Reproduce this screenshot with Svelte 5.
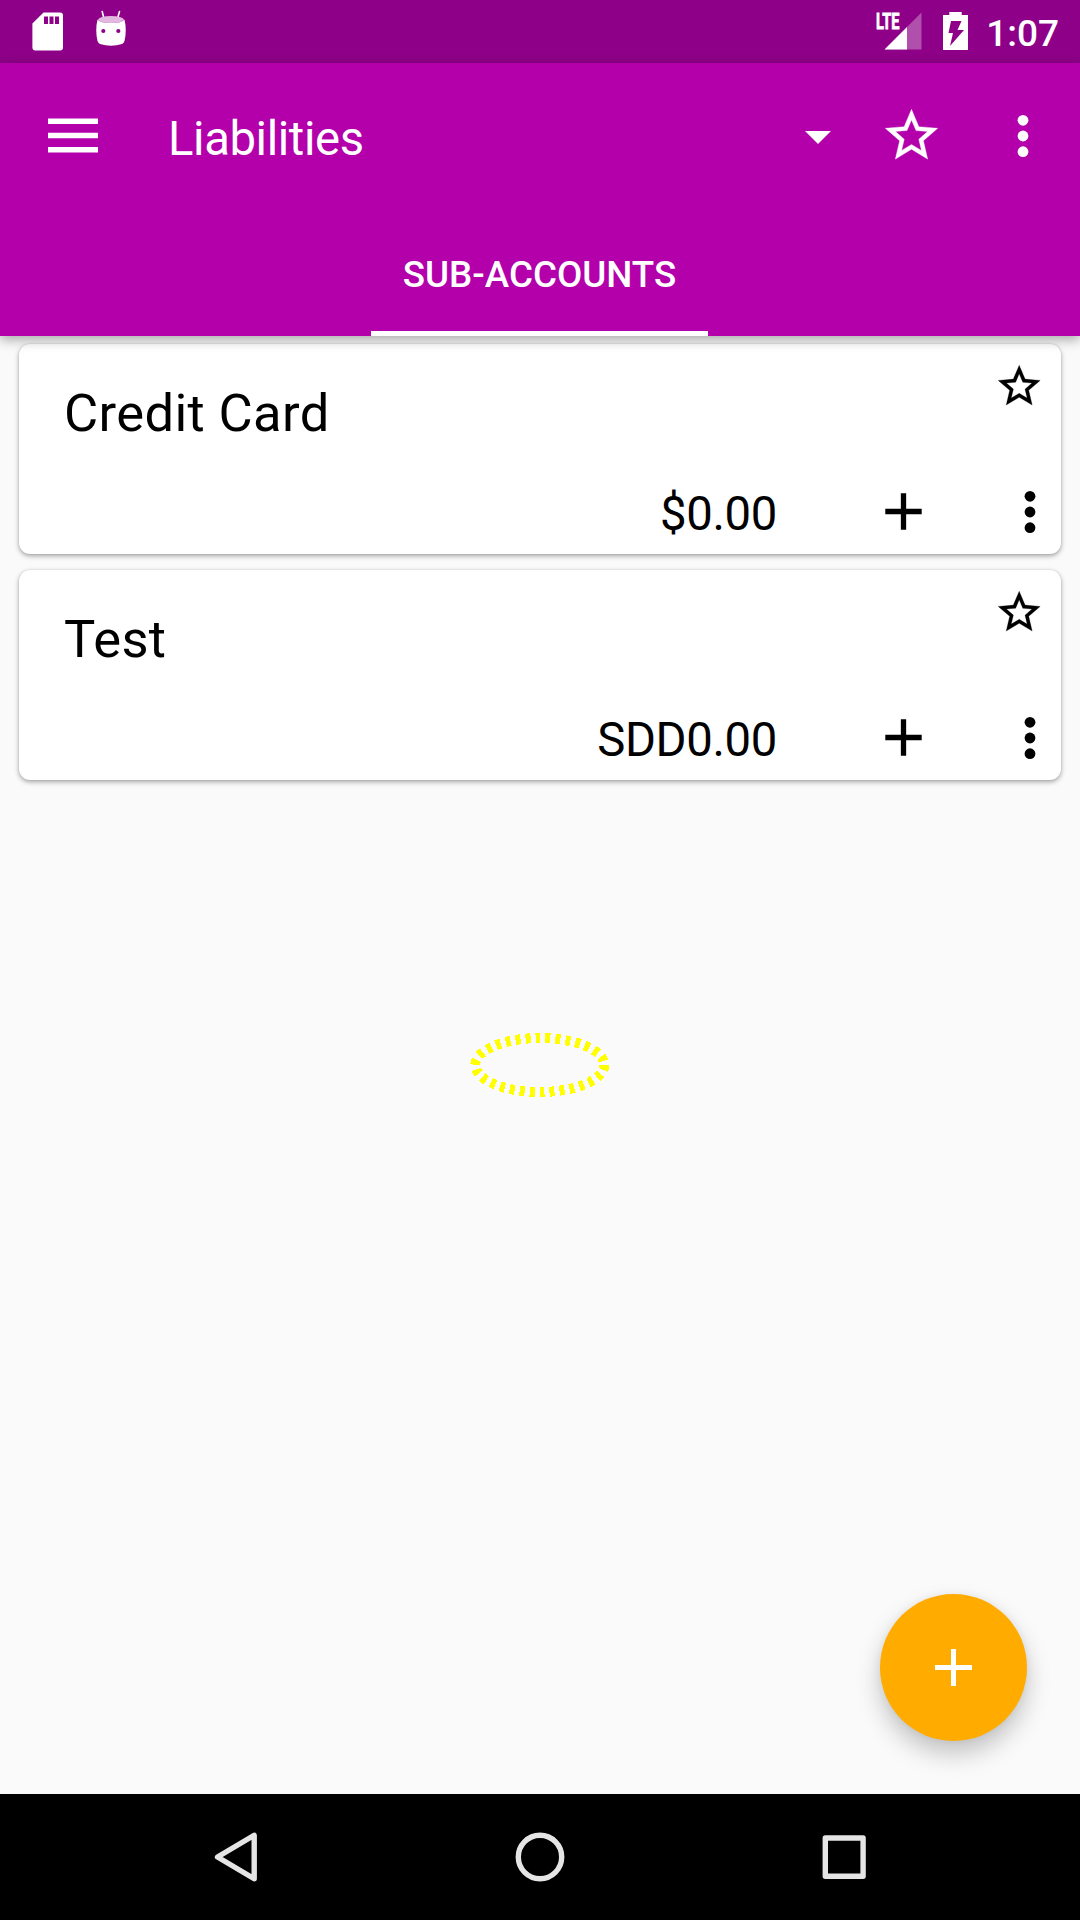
<script>
  const accounts = [
    { name: 'Credit Card', balance: '$0.00' },
    { name: 'Test', balance: 'SDD0.00' }
  ];
</script>

{#snippet star(size)}
  <svg width={size} height={size} viewBox="0 0 24 24" fill="currentColor" stroke="currentColor" stroke-width=".12">
    <path d="M22 9.24l-7.19-.62L12 2 9.19 8.63 2 9.24l5.46 4.73L5.82 21 12 17.27 18.18 21l-1.63-7.03L22 9.24zM12 15.4l-3.76 2.27 1-4.28-3.32-2.88 4.38-.38L12 6.1l1.71 4.04 4.38.38-3.32 2.88 1 4.28L12 15.4z" />
  </svg>
{/snippet}

{#snippet dots()}
  <svg width="12" height="44" viewBox="0 0 12 44" fill="currentColor">
    <circle cx="6" cy="6.300" r="5.400" />
    <circle cx="6" cy="22" r="5.400" />
    <circle cx="6" cy="37.700" r="5.400" />
  </svg>
{/snippet}

<div class="screen">
  <div class="status">
    <svg class="sd" width="31" height="39" viewBox="0 0 31 39">
      <path d="M11.500.500H28a3 3 0 0 1 3 3V35.500a3 3 0 0 1-3 3H3.400a3 3 0 0 1-3-3V11.500z" fill="#fff" />
      <path d="M12 4.500h4v7.500h-4zM17.500 4.500h4v7.500h-4zM23 4.500h4v7.500h-4z" fill="#8d0087" />
    </svg>
    <svg class="droid" width="32" height="37" viewBox="0 0 32 37">
      <path d="M7.200 1.500l1.500 6M24.500 1.500l-1.700 6" stroke="#fff" stroke-width="1.600" stroke-linecap="round" />
      <path d="M3 9.500Q5 6 16 6T29 9.500Q27 13 16 13T3 9.500z" fill="#e2b8e0" />
      <path d="M2.500 9.500Q5 13 16 13T29.500 9.500Q32 20 29.500 31Q29 33 27 33.900Q16 37.500 5 33.900Q3 33 2.500 31Q0 20 2.500 9.500z" fill="#fff" />
      <circle cx="8.300" cy="21" r="2.100" fill="#8d0087" />
      <circle cx="23.300" cy="21" r="2.100" fill="#8d0087" />
    </svg>
    <div class="grow"></div>
    <svg class="signal" width="48" height="40" viewBox="0 0 48 40">
      <path d="M46.500.500V37.500H9.500z" fill="#fff" opacity=".31" />
      <path d="M32 15V37.500H9.500z" fill="#fff" />
      <text x="1" y="17.300" textLength="23.500" lengthAdjust="spacingAndGlyphs">LTE</text>
    </svg>
    <svg class="battery" width="25" height="38" viewBox="0 0 25 38">
      <path d="M6.300 0H18.700V3H25V38H0V3H6.300z" fill="#fff" />
      <path d="M8 9H18.500L14.500 18H21L7 34L10 21H5.500z" fill="#8d0087" />
    </svg>
    <span class="clock">1:07</span>
  </div>

  <header>
    <div class="toolbar">
      <svg class="menu" width="50" height="35" viewBox="0 0 50 35" fill="#fff">
        <path d="M0 .500H50V6H0zM0 14.700H50V20.200H0zM0 28.900H50V34.400H0z" />
      </svg>
      <h1>Liabilities</h1>
      <svg class="caret" width="26" height="13" viewBox="0 0 26 13"><path d="M0 0H26L13 13z" fill="#fff" /></svg>
      <span class="fav">{@render star(63)}</span>
      <span class="more">{@render dots()}</span>
    </div>
    <div class="tabs"><div class="tab">SUB-ACCOUNTS</div></div>
  </header>

  <main>
    {#each accounts as account}
      <section class="card">
        <div class="top">
          <h2>{account.name}</h2>
          <span class="star">{@render star(50.4)}</span>
        </div>
        <div class="bottom">
          <span class="balance">{account.balance}</span>
          <svg class="add" width="37" height="37" viewBox="0 0 37 37">
            <path d="M.300 18.500H36.700M18.500.300V36.700" stroke="#000" stroke-width="5.300" />
          </svg>
          {@render dots()}
        </div>
      </section>
    {/each}
    <div class="ring">
      <svg width="140" height="64" viewBox="0 0 140 64">
        <ellipse cx="69.800" cy="32" rx="64.500" ry="27" fill="none" stroke="#ff0" stroke-width="10" stroke-dasharray="5 5" shape-rendering="crispEdges" />
      </svg>
    </div>
    <div class="fab">
      <svg width="37" height="37" viewBox="0 0 37 37">
        <path d="M0 18.500H37M18.500 0V37" stroke="#fff" stroke-width="5" />
      </svg>
    </div>
  </main>

  <nav>
    <svg width="50" height="52" viewBox="0 0 50 52">
      <path d="M43.200 4.300V47.700L6.500 26z" />
    </svg>
    <svg width="50" height="52" viewBox="0 0 50 52">
      <circle cx="25" cy="26" r="21.700" />
    </svg>
    <svg width="50" height="52" viewBox="0 0 50 52">
      <path d="M6.300 7H44.100V45.200H6.300z" />
    </svg>
  </nav>
</div>

<style>
  :global(body) { margin: 0; }
  .screen {
    width: 1080px;
    height: 1920px;
    display: flex;
    flex-direction: column;
    background: #fafafa;
    color: #000;
    font-family: Roboto, sans-serif;
    overflow: hidden;
  }
  svg { display: block; flex: none; }
  h1, h2 { margin: 0; font-weight: 400; }
  .grow { flex: 1; }

  .status {
    height: 63px;
    box-sizing: border-box;
    flex: none;
    display: flex;
    align-items: flex-start;
    padding: 12px 21px 0 32px;
    background: #8d0087;
    color: #fff;
  }
  .droid { margin: -2px 0 0 32px; }
  .signal { margin-right: 20px; overflow: visible; }
  .signal text {
    font: 700 22px Roboto, sans-serif;
    fill: #fff;
    stroke: #fff;
    stroke-width: 0.8px;
  }
  .clock {
    margin: 0 0 0 18px;
    font-size: 37px;
    font-weight: 500;
    line-height: 44px;
  }

  header {
    height: 273px;
    flex: none;
    position: relative;
    z-index: 1;
    background: #b300ab;
    color: #fff;
    box-shadow: 0 4px 11px rgba(0, 0, 0, 0.32);
  }
  .toolbar {
    height: 147px;
    box-sizing: border-box;
    display: flex;
    align-items: center;
    padding: 0 51.5px 2px 48px;
  }
  h1 {
    flex: 1;
    margin: 6px 0 0 70px;
    font-size: 47.25px;
    line-height: 56px;
    letter-spacing: -0.4px;
  }
  .menu { margin-top: -1px; }
  .caret { margin-top: 4px; }
  .fav { margin-left: 49px; }
  .more { margin-left: 74px; }
  .tabs { height: 126px; display: flex; justify-content: center; }
  .tab {
    width: 337px;
    height: 126px;
    box-sizing: border-box;
    margin-right: 1px;
    border-bottom: 5px solid #fff;
    text-align: center;
    font-size: 36.75px;
    font-weight: 500;
    line-height: 129px;
  }

  main {
    flex: 1;
    position: relative;
    display: flex;
    flex-direction: column;
    align-items: stretch;
    gap: 16px;
    padding: 8px 19px 0;
  }
  .card {
    height: 210px;
    box-sizing: border-box;
    flex: none;
    display: flex;
    flex-direction: column;
    justify-content: space-between;
    padding: 17px 25px 18px 45px;
    border-radius: 11px;
    background: #fff;
    box-shadow: 0 2px 5px rgba(0, 0, 0, 0.34), 0 0 2px rgba(0, 0, 0, 0.12);
  }
  .top { display: flex; justify-content: space-between; align-items: flex-start; }
  .star { margin-right: -8px; }
  h2 { margin-top: 21px; font-size: 52.5px; line-height: 62px; letter-spacing: 0.38px; }
  .bottom { display: flex; align-items: center; justify-content: flex-end; }
  .balance { margin-top: 5px; font-size: 47.25px; line-height: 44px; letter-spacing: -0.35px; }
  .add { margin: 0 102px 0 108px; }
  .ring { display: flex; justify-content: center; margin-top: 237px; }
  .fab {
    position: absolute;
    right: 53px;
    bottom: 53px;
    width: 147px;
    height: 147px;
    display: grid;
    place-items: center;
    border-radius: 50%;
    background: #ffab00;
    box-shadow: 0 13px 24px rgba(0, 0, 0, 0.22), 0 0 8px rgba(0, 0, 0, 0.06);
  }

  nav {
    height: 126px;
    flex: none;
    display: flex;
    align-items: center;
    justify-content: space-between;
    padding: 0 211px;
    background: #000;
  }
  nav svg { fill: none; stroke: #e5e5e5; stroke-width: 5.4; stroke-linejoin: round; }
</style>
